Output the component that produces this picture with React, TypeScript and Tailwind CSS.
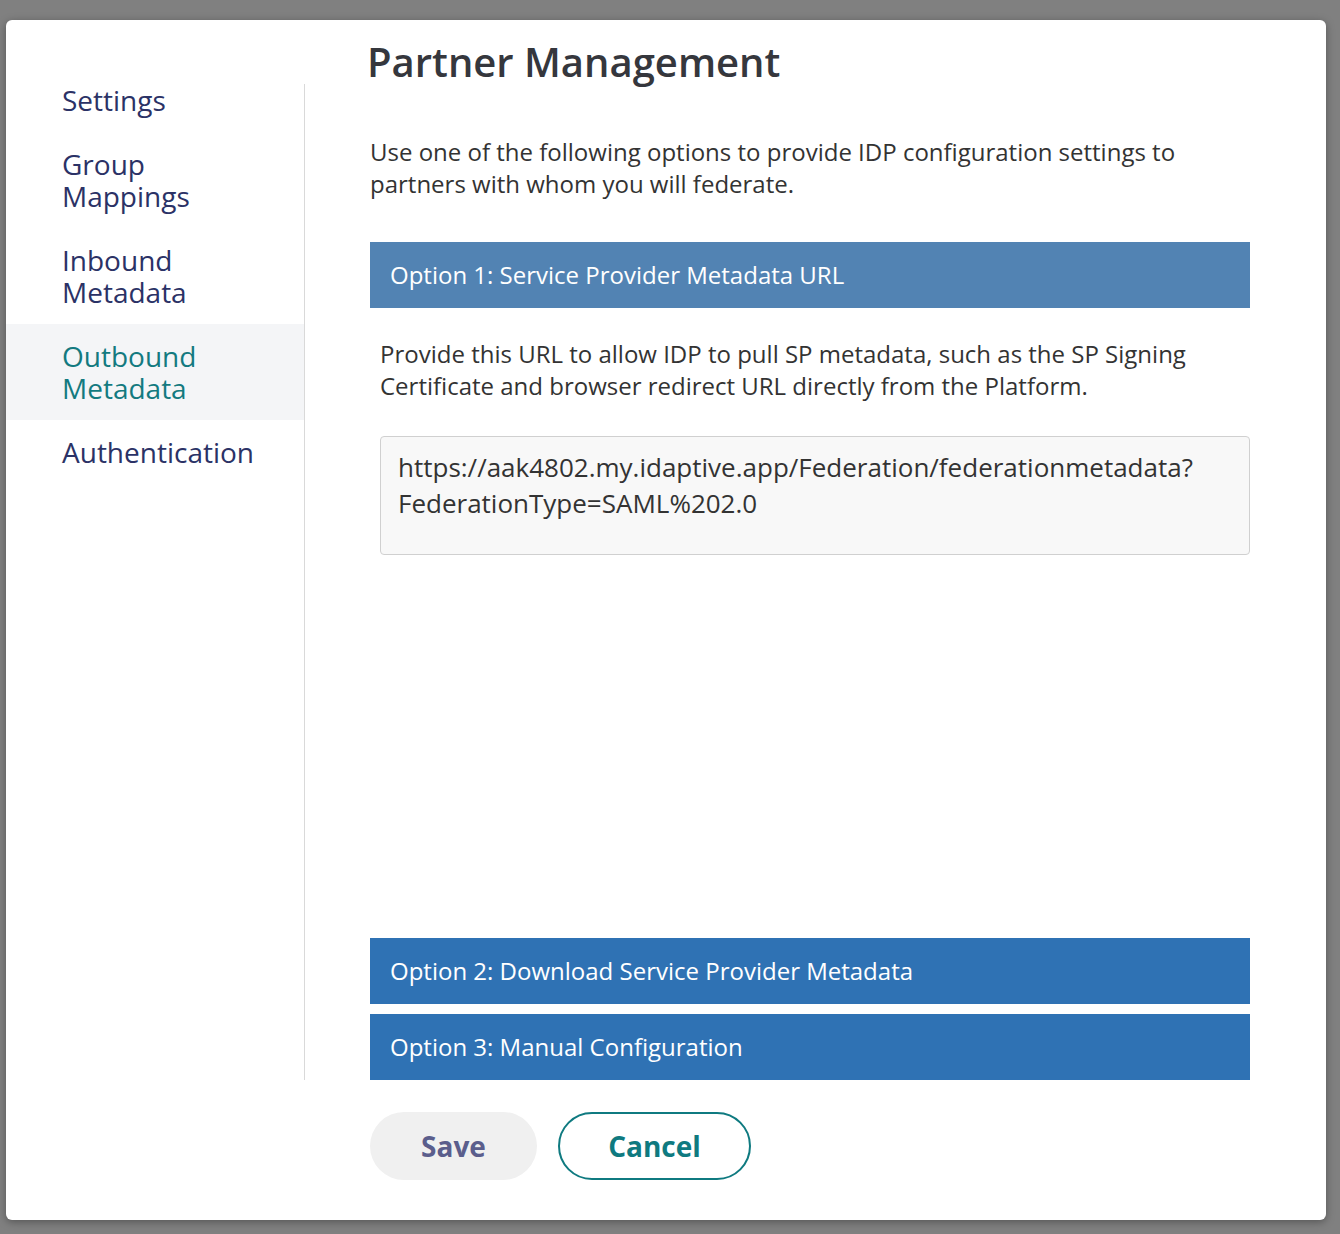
const navItems = [
  { label: 'Settings', active: false },
  { label: 'Group\nMappings', active: false },
  { label: 'Inbound\nMetadata', active: false },
  { label: 'Outbound\nMetadata', active: true },
  { label: 'Authentication', active: false },
]

function OptionHeader({ title, light }: { title: string; light?: boolean }) {
  return (
    <div
      className={`flex h-[66px] items-center px-5 text-[24px] text-white ${
        light ? 'bg-[#5283b3]' : 'bg-[#2f72b4]'
      }`}
    >
      {title}
    </div>
  )
}

export default function App() {
  return (
    <div
      className="min-h-[1234px] bg-[#808080] pt-[20px] px-[6px]"
      style={{ fontFamily: '"Open Sans", "Noto Sans", sans-serif' }}
    >
      <div className="w-[1320px] h-[1200px] rounded-[6px] bg-white shadow-[0_2px_8px_rgba(0,0,0,0.35)] flex flex-col">
        <div className="flex">
          <nav className="w-[298px] pt-[48px]">
            {navItems.map((item) => (
              <div
                key={item.label}
                className={`whitespace-pre-line py-4 pl-[56px] text-[28px] leading-[32px] ${
                  item.active ? 'bg-[#f4f5f7] text-[#137a80]' : 'text-[#2b3266]'
                }`}
              >
                {item.label}
              </div>
            ))}
          </nav>
          <div className="mt-[64px] w-px bg-[#d9d9d9]" />
          <main className="flex-1 pl-[65px] pr-[76px]">
            <h1 className="-ml-[3px] mt-[18px] text-[40px] leading-[48px] font-semibold text-[#35373d]">
              Partner Management
            </h1>
            <p className="mt-[50px] text-[24px] leading-[32px] text-[#333]">
              Use one of the following options to provide IDP configuration settings to partners with whom you will
              federate.
            </p>
            <div className="mt-[42px]">
              <OptionHeader title="Option 1: Service Provider Metadata URL" light />
              <div className="h-[600px] pl-[10px]">
                <p className="mt-[30px] text-[24px] leading-[32px] text-[#333]">
                  Provide this URL to allow IDP to pull SP metadata, such as the SP Signing Certificate and browser
                  redirect URL directly from the Platform.
                </p>
                <div className="mt-[34px] h-[119px] rounded-[4px] border border-[#d0d0d0] bg-[#f8f8f8] pl-[17px] pr-4 pt-[12px] text-[26px] leading-[36px] text-[#333] break-all">
                  https://aak4802.my.idaptive.app/Federation/federationmetadata?
                  <br />
                  FederationType=SAML%202.0
                </div>
              </div>
            </div>
            <div className="flex flex-col gap-[10px]">
              <OptionHeader title="Option 2: Download Service Provider Metadata" />
              <OptionHeader title="Option 3: Manual Configuration" />
            </div>
          </main>
        </div>
        <div className="flex gap-[21px] pl-[364px] pt-[32px]">
          <button className="h-[68px] w-[167px] rounded-full bg-[#f0f0f0] text-[28px] font-bold text-[#5b5e8c]">
            Save
          </button>
          <button className="h-[68px] w-[193px] rounded-full border-2 border-[#0f7a80] text-[28px] font-bold text-[#0f7a80]">
            Cancel
          </button>
        </div>
      </div>
    </div>
  )
}
